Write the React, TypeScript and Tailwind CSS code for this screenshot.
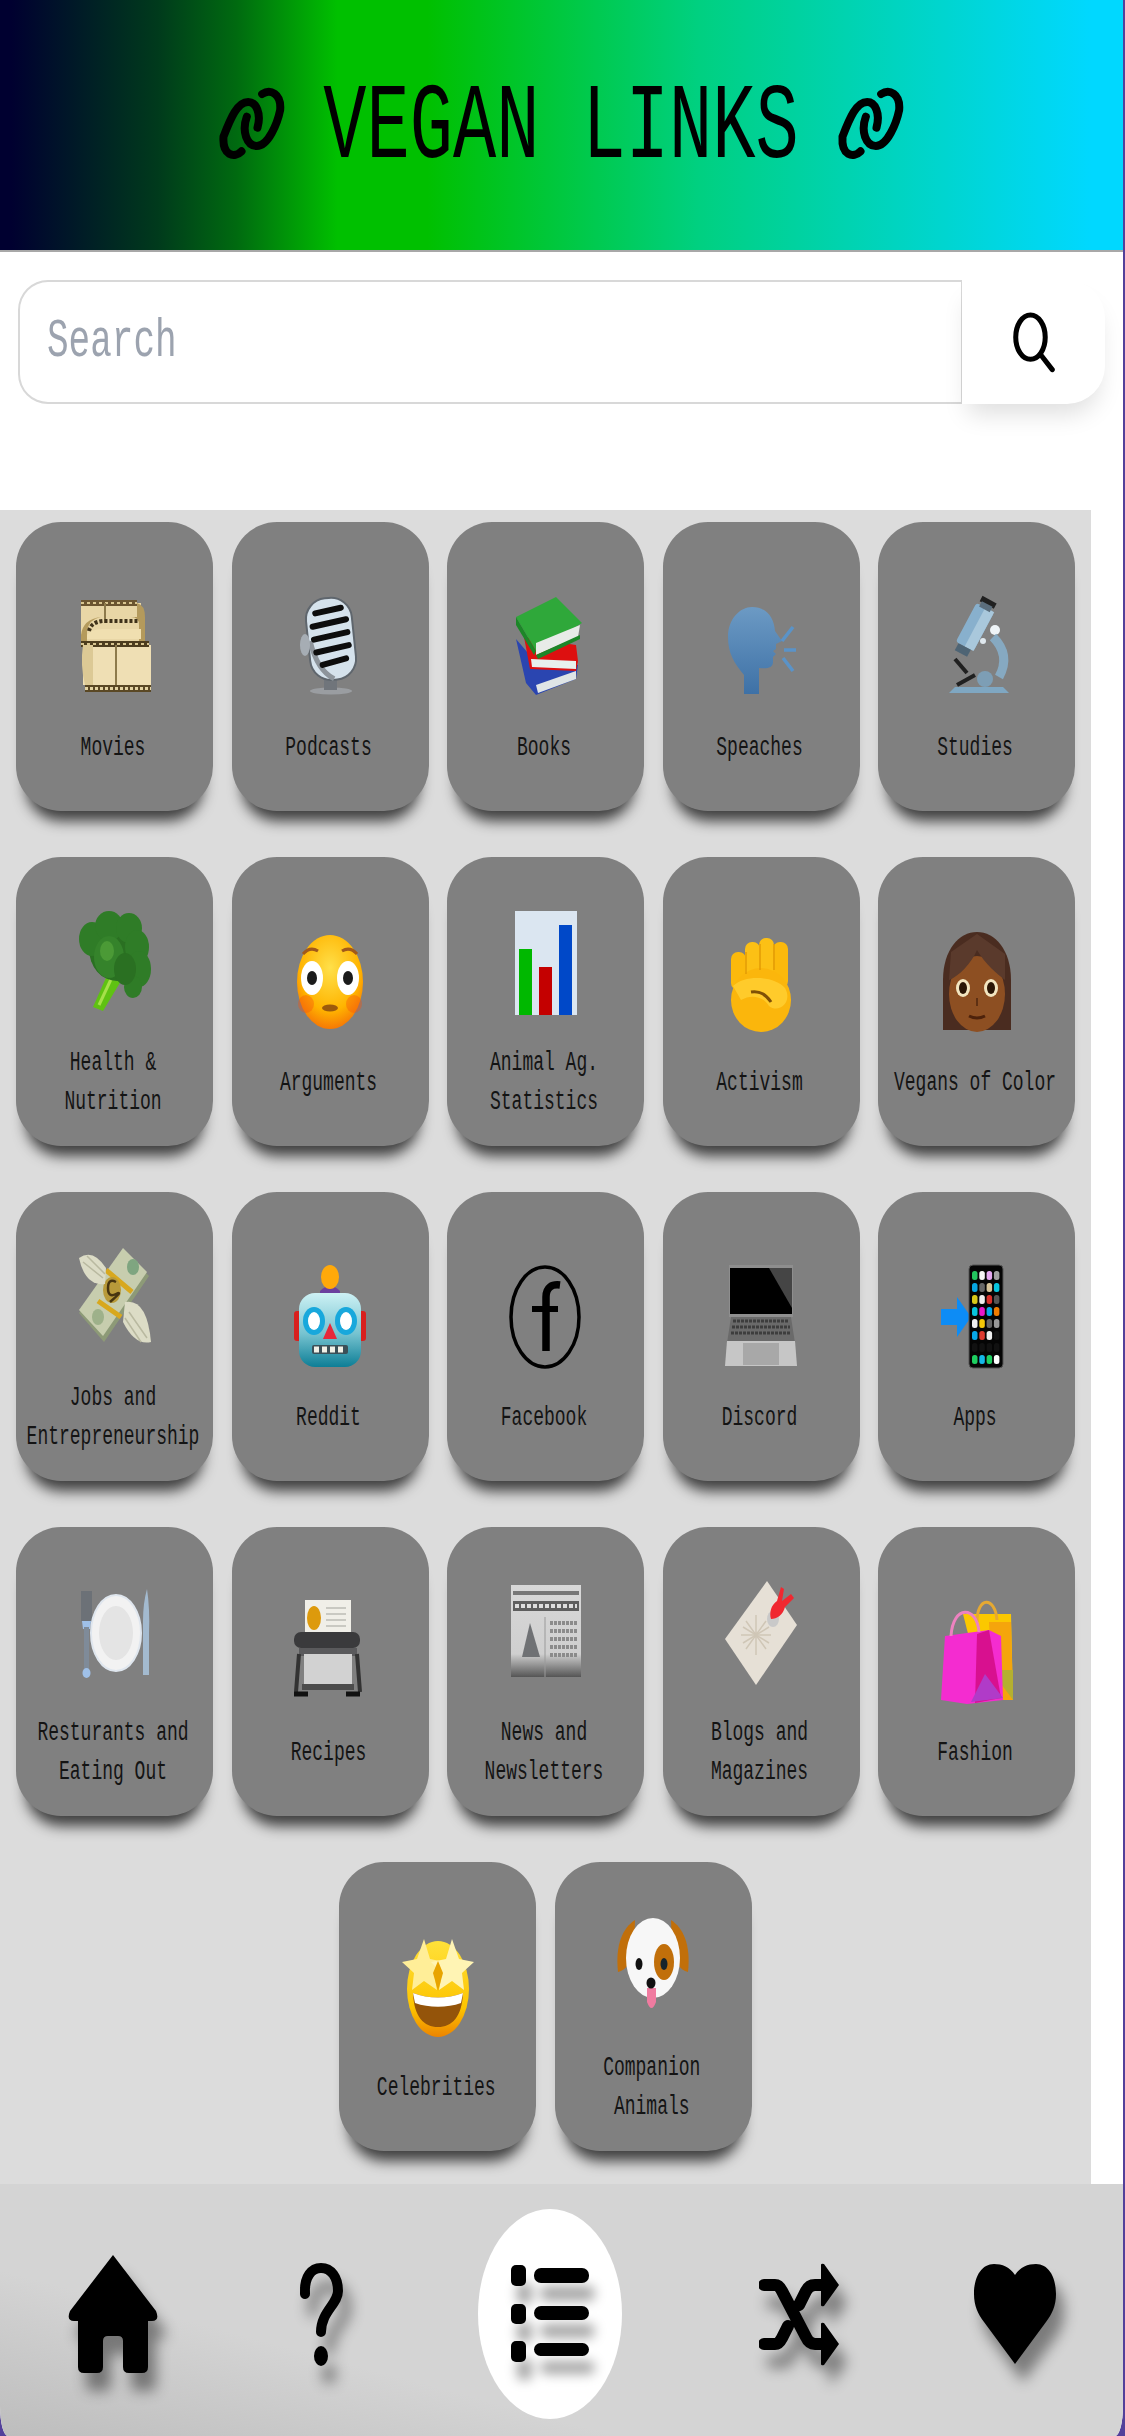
import React from "react";

const mono = "font-['Liberation_Mono','DejaVu_Sans_Mono',monospace]";

function E({ children }: { children: React.ReactNode }) {
  return (
    <svg width="72" height="104" viewBox="0 0 72 104" className="block overflow-visible">
      {children}
    </svg>
  );
}

const Movies = () => (
  <E>
    <rect x="2" y="8" width="60" height="44" fill="#e8d6a6" />
    <rect x="2" y="5" width="56" height="6" fill="#6b5530" />
    <path d="M2 8h56" stroke="#d9c690" strokeWidth="2" strokeDasharray="3 3" />
    <path d="M26 8v20" stroke="#8d7a4b" strokeWidth="2" />
    <path d="M58 8q8 2 8 14v24h-6v-16q0-8-8-8H22q-12 2-14 14v12H2V40q2-16 20-18h36z" fill="#b49a5c" />
    <path d="M10 36q2-9 14-10h36" fill="none" stroke="#3f321a" strokeWidth="4" strokeDasharray="3 2" />
    <path d="M8 40q4-6 16-6h38v10H8z" fill="#f0dfb0" />
    <rect x="4" y="50" width="68" height="40" fill="#efdfb4" />
    <rect x="2" y="46" width="68" height="6" fill="#4d3d1e" />
    <path d="M2 49h68" stroke="#d9c690" strokeWidth="2" strokeDasharray="3 3" />
    <path d="M37 50v40" stroke="#8d7a4b" strokeWidth="2" />
    <path d="M4 50q-3 20 2 40h8V50z" fill="#dcc995" />
    <rect x="6" y="90" width="66" height="7" fill="#5a4825" />
    <path d="M6 93.5h66" stroke="#e3d3a2" strokeWidth="3" strokeDasharray="3 2" />
  </E>
);

const Mic = () => (
  <E>
    <ellipse cx="37" cy="96" rx="21" ry="3.500" fill="#9a9da1" />
    <rect x="30" y="78" width="13" height="17" fill="#70757b" />
    <g transform="rotate(-6 36 44)">
      <rect x="14" y="3" width="46" height="82" rx="21" fill="#d5e2ec" stroke="#5f666d" strokeWidth="2" />
      <path d="M16 44q4 30 20 40" fill="none" stroke="#8d949b" strokeWidth="5" />
      <g stroke="#0d0d0d" strokeWidth="6" strokeLinecap="round">
        <path d="M24 17 50 14" />
        <path d="M20 30 54 26" />
        <path d="M20 43 54 39" />
        <path d="M21 56 54 52" />
        <path d="M26 69 50 65" />
      </g>
    </g>
    <ellipse cx="11" cy="50" rx="5" ry="11" fill="#a6adb4" />
  </E>
);

const Books = () => (
  <E>
    <path d="M6 44 16 88 26 100 66 84 68 70 18 58z" fill="#2a45b0" />
    <path d="M26 90 66 76 66 84 28 98z" fill="#dfe5e6" />
    <path d="M14 42 66 50 68 66 66 76 20 74z" fill="#dd1010" />
    <path d="M21 64 66 66 66 74 22 72z" fill="#e8f1ee" />
    <path d="M6 22 46 2 72 28 26 56z" fill="#2fa83a" />
    <path d="M6 22 26 56 24 60 6 30z" fill="#1c8628" />
    <path d="M26 48 70 30 68 42 26 60z" fill="#e8ebe8" />
    <path d="M26 60 70 40 70 44 28 64z" fill="#1c8628" />
  </E>
);

const Speak = () => (
  <E>
    <defs>
      <linearGradient id="sp" x1="0" y1="0" x2="0" y2="1">
        <stop offset="0" stopColor="#6c9ac4" />
        <stop offset="1" stopColor="#3e71a6" />
      </linearGradient>
    </defs>
    <g transform="translate(3 6)">
      <path d="M0 36C0 18 12 6 24 6c14 0 22 10 23 24l7 10-6 3v5l-3 2 3 3-3 3v5c0 6-6 7-14 6v26H16V74C6 62 0 52 0 36z" fill="url(#sp)" />
    </g>
    <g stroke="#5a93c8" strokeWidth="3.500" fill="none">
      <path d="M57 46 68 32" />
      <path d="M59 55H71" />
      <path d="M58 63 68 76" />
    </g>
  </E>
);

const Scope = () => (
  <E>
    <g transform="rotate(28 34 32)">
      <rect x="24" y="10" width="20" height="44" rx="3" fill="#88b0cd" />
      <rect x="34" y="10" width="10" height="44" fill="#a9c8dc" />
      <rect x="26" y="1" width="16" height="6" fill="#202020" />
      <rect x="28" y="6" width="12" height="6" fill="#5b6e7d" />
      <rect x="27" y="54" width="14" height="8" fill="#4e6474" />
    </g>
    <circle cx="54" cy="35" r="5" fill="#eef3f6" />
    <circle cx="42" cy="46" r="3" fill="#dfe8ee" />
    <path d="M52 42q18 18 6 40" fill="none" stroke="#86a9c1" strokeWidth="9" />
    <path d="M14 64 26 78" stroke="#202020" strokeWidth="4" />
    <path d="M16 90 34 80" stroke="#202020" strokeWidth="4" />
    <circle cx="44" cy="84" r="8" fill="#7d9eb5" />
    <path d="M8 98 14 92h48l6 6z" fill="#7fa7c2" />
  </E>
);

const Broccoli = () => (
  <E>
    <path d="M14 96 30 60h18L24 100z" fill="#5fc212" />
    <path d="M20 94 34 64" stroke="#a6e04a" strokeWidth="3" />
    <ellipse cx="38" cy="38" rx="28" ry="32" fill="#2a7022" />
    <g fill="#2f7c27">
      <ellipse cx="13" cy="28" rx="13" ry="17" />
      <ellipse cx="30" cy="15" rx="14" ry="15" />
      <ellipse cx="50" cy="17" rx="13" ry="15" />
      <ellipse cx="58" cy="36" rx="12" ry="17" />
      <ellipse cx="60" cy="58" rx="12" ry="18" />
      <ellipse cx="54" cy="76" rx="9" ry="11" />
    </g>
    <ellipse cx="30" cy="46" rx="15" ry="21" fill="#35832b" />
    <ellipse cx="46" cy="58" rx="11" ry="16" fill="#2a7022" />
    <ellipse cx="28" cy="40" rx="7" ry="10" fill="#4b9a36" />
  </E>
);

const Flushed = () => (
  <E>
    <defs>
      <radialGradient id="fl" cx="0.5" cy="0.35" r="0.7">
        <stop offset="0" stopColor="#ffe04a" />
        <stop offset="0.65" stopColor="#ffb400" />
        <stop offset="1" stopColor="#f46a06" />
      </radialGradient>
    </defs>
    <ellipse cx="36" cy="52" rx="33" ry="47" fill="url(#fl)" />
    <ellipse cx="18" cy="48" rx="11" ry="17" fill="#fff" />
    <ellipse cx="54" cy="48" rx="11" ry="17" fill="#fff" />
    <ellipse cx="18" cy="48" rx="5" ry="7" fill="#1b1b1b" />
    <ellipse cx="54" cy="48" rx="5" ry="7" fill="#1b1b1b" />
    <path d="M9 24q7-8 15-3M63 24q-7-8-15-3" stroke="#a1591a" strokeWidth="3" fill="none" />
    <ellipse cx="36" cy="78" rx="8" ry="3.5" fill="#9c5a0c" />
    <ellipse cx="12" cy="74" rx="8" ry="9" fill="#f5540c" opacity=".4" />
    <ellipse cx="60" cy="74" rx="8" ry="9" fill="#f5540c" opacity=".4" />
  </E>
);

const Chart = () => (
  <E>
    <rect x="5" y="0" width="62" height="104" fill="#dbe6f1" />
    <rect x="9" y="38" width="13" height="66" fill="#00b800" />
    <rect x="29" y="56" width="13" height="48" fill="#c40000" />
    <rect x="49" y="14" width="13" height="90" fill="#0048c8" />
  </E>
);

const Fist = () => (
  <E>
    <rect x="6" y="22" width="15" height="38" rx="7" fill="#fbb90c" />
    <rect x="20" y="12" width="15" height="44" rx="7" fill="#fcc015" />
    <rect x="34" y="8" width="15" height="48" rx="7" fill="#fcc015" />
    <rect x="48" y="12" width="15" height="46" rx="7" fill="#fbb90c" />
    <ellipse cx="36" cy="70" rx="30" ry="32" fill="#fbb60c" />
    <path d="M8 56C20 44 50 46 60 58C68 72 54 84 44 76C38 66 26 64 16 70Z" fill="#ffcb2b" />
    <path d="M26 62Q38 60 46 72" stroke="#7f5006" strokeWidth="3" fill="none" />
    <path d="M21 22v22M35 14v26M49 14v26" stroke="#e29a05" strokeWidth="1.500" />
  </E>
);

const Woman = () => (
  <E>
    <path d="M2 100V50C2 20 18 2 36 2s34 18 34 48v50z" fill="#4a2c20" />
    <ellipse cx="36" cy="64" rx="28" ry="38" fill="#8d4f22" />
    <path d="M8 50C18 46 30 34 36 20c8 14 20 24 28 30V24L36 4 10 22z" fill="#5a3a2c" />
    <ellipse cx="22" cy="58" rx="7" ry="9" fill="#f2e5c0" />
    <ellipse cx="50" cy="58" rx="7" ry="9" fill="#f2e5c0" />
    <ellipse cx="22" cy="58" rx="4" ry="6" fill="#2a1606" />
    <ellipse cx="50" cy="58" rx="4" ry="6" fill="#2a1606" />
    <path d="M36 68v8" stroke="#5e3013" strokeWidth="2" />
    <path d="M28 86q8 4 16 0" stroke="#4d220b" strokeWidth="3" fill="none" />
  </E>
);

const Money = () => (
  <E>
    <path d="M0 67 25 96 70 30 45 5z" fill="#8d9a77" />
    <path d="M0 64 24 90 68 26 44 2z" fill="#c7cdae" />
    <path d="M27 24 53 46M19 55 42 71" stroke="#d8a81e" strokeWidth="5" />
    <ellipse cx="33" cy="44" rx="9" ry="13" fill="#b89a3a" />
    <path d="M37 36q-8-4-8 6t8 6-6 8" stroke="#473510" strokeWidth="2.500" fill="none" />
    <ellipse cx="54" cy="21" rx="6" ry="8" fill="#7fa580" />
    <ellipse cx="19" cy="71" rx="6" ry="8" fill="#9eb18a" />
    <path d="M0 12Q14 2 27 22L26 38Q6 40 0 12z" fill="#dcdcc6" />
    <path d="M4 16 24 32M8 10 26 28" stroke="#b9b9a0" strokeWidth="1.500" />
    <path d="M72 96Q56 100 44 76L46 56Q68 52 72 96z" fill="#dcdcc6" />
    <path d="M68 92 50 66M62 96 46 72" stroke="#b9b9a0" strokeWidth="1.500" />
  </E>
);

const Robot = () => (
  <E>
    <rect x="0" y="46" width="8" height="30" rx="3" fill="#d9201e" />
    <rect x="64" y="46" width="8" height="30" rx="3" fill="#d9201e" />
    <path d="M26 26q10-10 20 0v6H26z" fill="#6b3f9e" />
    <ellipse cx="36" cy="12" rx="9" ry="12" fill="#ffa90a" />
    <defs>
      <linearGradient id="rb" x1="0" y1="0" x2="0" y2="1">
        <stop offset="0" stopColor="#cdf1f4" />
        <stop offset="0.55" stopColor="#76c3d0" />
        <stop offset="1" stopColor="#0d7e96" />
      </linearGradient>
    </defs>
    <rect x="5" y="28" width="62" height="74" rx="16" fill="url(#rb)" />
    <ellipse cx="20" cy="56" rx="11" ry="14" fill="#18a8dc" />
    <ellipse cx="52" cy="56" rx="11" ry="14" fill="#18a8dc" />
    <ellipse cx="20" cy="56" rx="6" ry="9" fill="#fff" />
    <ellipse cx="52" cy="56" rx="6" ry="9" fill="#fff" />
    <path d="M36 58 43 74H29z" fill="#e6283a" />
    <rect x="18" y="80" width="36" height="9" rx="2" fill="#3b5058" />
    <path d="M20 84.500h32" stroke="#f0f0e6" strokeWidth="6" strokeDasharray="5 3" />
  </E>
);

const Fb = () => (
  <E>
    <ellipse cx="35" cy="52" rx="34" ry="50" fill="none" stroke="#000" strokeWidth="3.500" />
    <path d="M36 86V32c0-10 6-13 14-12" fill="none" stroke="#000" strokeWidth="7.500" />
    <path d="M22 44H48" stroke="#000" strokeWidth="6" />
  </E>
);

const Laptop = () => (
  <E>
    <rect x="4" y="0" width="64" height="52" fill="#8e8e8e" />
    <rect x="5" y="3" width="62" height="46" fill="#000" />
    <path d="M44 3h23v40z" fill="#454545" />
    <path d="M6 52h60l4 26H2z" fill="#6a6a6a" />
    <path d="M8 56h56M7 62h58M6 68h60" stroke="#3d3d3d" strokeWidth="3" strokeDasharray="3 1" />
    <path d="M2 76h68l2 25H0z" fill="#c6c6c6" />
    <rect x="18" y="78" width="36" height="22" fill="#a8a8a8" />
  </E>
);

const Phone = () => {
  const rows = [
    ["#22c55e", "#f5f5f5", "#e4a8f0", "#a0a0a0"],
    ["#06a5e0", "#666", "#d8c59a", "#07c4dc"],
    ["#d8c818", "#eee", "#d9302a", "#555"],
    ["#07c4dc", "#e818c8", "#08a8e8", "#f07c00"],
    ["#eee", "#f4c808", "#666", "#999"],
    ["#08a8e8", "#dd3a30", "#eee", "#111"],
    ["#111", "#111", "#111", "#111"],
    ["#1ecf60", "#14b8e8", "#1ecf60", "#fff"],
  ];
  return (
    <E>
      <path d="M0 44h16V32l14 20-14 20V60H0z" fill="#0d8cf5" />
      <rect x="28" y="0" width="34" height="103" rx="4" fill="#050505" stroke="#555" strokeWidth="1" />
      {rows.map((r, i) =>
        r.map((c, j) => <rect key={i + "-" + j} x={31 + j * 7.300} y={6 + i * 12} width="5.500" height="9" rx="2.500" fill={c} />)
      )}
    </E>
  );
};

const Plate = () => (
  <E>
    <rect x="2" y="10" width="11" height="30" fill="#6c7177" />
    <path d="M3 40h9l-1 8H4z" fill="#9fc0e8" />
    <rect x="5" y="46" width="5" height="44" fill="#7f8b99" />
    <ellipse cx="7.500" cy="92" rx="4" ry="5" fill="#9fc0e8" />
    <ellipse cx="37" cy="52" rx="25" ry="38" fill="#f2f2f2" stroke="#dfe6ee" strokeWidth="2" />
    <ellipse cx="37" cy="52" rx="17" ry="27" fill="#e4e4e4" />
    <path d="M68 8q3 20 2 44v42h-6V40q0-18 4-32z" fill="#a3bacf" />
  </E>
);

const Printer = () => (
  <E>
    <rect x="11" y="0" width="46" height="36" fill="#f0efe8" />
    <ellipse cx="20" cy="18" rx="7" ry="12" fill="#dd9a0c" />
    <path d="M32 8h20M32 14h20M32 20h20M32 26h20" stroke="#c9c9c2" strokeWidth="2" />
    <rect x="0" y="32" width="66" height="16" rx="7" fill="#3a3a3c" />
    <rect x="5" y="48" width="58" height="8" fill="#5a5a5c" />
    <rect x="10" y="54" width="48" height="34" fill="#d2d2d2" />
    <path d="M5 54 2 92M63 54l3 38" stroke="#333" strokeWidth="4" />
    <rect x="8" y="84" width="52" height="6" fill="#4c4c4c" />
    <path d="M0 94h14M52 94h14" stroke="#111" strokeWidth="5" />
  </E>
);

const News = () => (
  <E>
    <defs>
      <linearGradient id="nw" x1="0" y1="0" x2="0" y2="1">
        <stop offset="0" stopColor="#d8d8d8" />
        <stop offset="0.75" stopColor="#cfcfcf" />
        <stop offset="1" stopColor="#555" />
      </linearGradient>
    </defs>
    <rect x="1" y="4" width="70" height="92" fill="url(#nw)" />
    <rect x="3" y="10" width="66" height="4" fill="#777" />
    <rect x="3" y="20" width="66" height="10" fill="#5e5e5e" />
    <path d="M5 25h62" stroke="#ddd" strokeWidth="4" strokeDasharray="4 2" />
    <path d="M12 76 20 42l10 34z" fill="#6f7174" />
    <path d="M40 42h28M40 50h28M40 58h28M40 66h28M40 74h28" stroke="#8b8b8b" strokeWidth="4" strokeDasharray="3 1" />
    <path d="M35 36v60" stroke="#9a9a9a" />
  </E>
);

const Memo = () => (
  <E>
    <path d="M42 0 72 44 31 104 0 58z" fill="#e6e0d6" />
    <g stroke="#cfc6b6" strokeWidth="1.500">
      <path d="M16 54h30M31 34v40M21 40l20 28M41 40 21 68" />
      <path d="M18 46 44 62M44 46 18 62" />
    </g>
    <ellipse cx="48" cy="38" rx="6" ry="8" fill="#c9c9c9" />
    <path d="M46 38c-2-6 0-14 6-18l4-14 3 2-2 12 9-7 3 4-9 9c-2 8-8 12-14 12z" fill="#f02830" />
  </E>
);

const Bags = () => (
  <E>
    <path d="M22 14h38l10 0 2 86H44z" fill="#fbc800" />
    <path d="M48 22h22l2 78H52z" fill="#f5a50c" />
    <path d="M50 70h22v30z" fill="#b4b030" />
    <path d="M36 22C36-4 54-4 56 20" fill="none" stroke="#e5a932" strokeWidth="3" />
    <path d="M4 36 48 30 60 36 62 100 26 104 0 100z" fill="#f42cd0" />
    <path d="M36 34 48 30 60 98 34 103z" fill="#d8108f" />
    <path d="M44 74 62 98 30 102z" fill="#b03bc8" />
    <path d="M10 36C12 4 36 6 38 32" fill="none" stroke="#ee82c0" strokeWidth="3" />
  </E>
);

const Star = () => (
  <E>
    <defs>
      <linearGradient id="st" x1="0" y1="0" x2="0" y2="1">
        <stop offset="0" stopColor="#ffe13a" />
        <stop offset="0.7" stopColor="#fdc400" />
        <stop offset="1" stopColor="#ec8400" />
      </linearGradient>
    </defs>
    <ellipse cx="36" cy="54" rx="31" ry="48" fill="url(#st)" />
    <path d="M22 4l6 20 15 3-11 11 3 17-13-9-12 9 2-17L0 27l15-3z" fill="#ffee98" />
    <path d="M50 4l7 20 15 3-12 11 2 17-12-9-13 9 3-17-11-11 15-3z" fill="#fff4b4" />
    <path d="M36 26l5 12-5 18-5-18z" fill="#e8a400" />
    <path d="M11 58c16 6 34 6 50 0-1 24-11 34-25 34S12 82 11 58z" fill="#94540a" />
    <path d="M11 58c16 6 34 6 50 0l-2 10c-14 5-32 5-46 0z" fill="#fff" />
  </E>
);

const Dog = () => (
  <E>
    <path d="M18 4C6 12-2 28 1 56c8-2 14-10 16-22z" fill="#c16f0a" />
    <path d="M54 4c12 8 20 24 17 52-8-2-14-10-16-22z" fill="#c16f0a" />
    <ellipse cx="36" cy="42" rx="27" ry="40" fill="#f7f7f7" />
    <ellipse cx="47" cy="46" rx="10" ry="18" fill="#c16f0a" />
    <ellipse cx="47" cy="48" rx="3.500" ry="6" fill="#16242c" />
    <ellipse cx="22" cy="48" rx="3.500" ry="6" fill="#111" />
    <path d="M30 72h9v14q-4.500 12-9 0z" fill="#f07ba0" />
    <ellipse cx="34" cy="67" rx="4.500" ry="5.500" fill="#111" />
  </E>
);

const items: { lines: string[]; icon: React.ReactNode }[] = [
  { lines: ["Movies"], icon: <Movies /> },
  { lines: ["Podcasts"], icon: <Mic /> },
  { lines: ["Books"], icon: <Books /> },
  { lines: ["Speaches"], icon: <Speak /> },
  { lines: ["Studies"], icon: <Scope /> },
  { lines: ["Health &", "Nutrition"], icon: <Broccoli /> },
  { lines: ["Arguments"], icon: <Flushed /> },
  { lines: ["Animal Ag.", "Statistics"], icon: <Chart /> },
  { lines: ["Activism"], icon: <Fist /> },
  { lines: ["Vegans of Color"], icon: <Woman /> },
  { lines: ["Jobs and", "Entrepreneurship"], icon: <Money /> },
  { lines: ["Reddit"], icon: <Robot /> },
  { lines: ["Facebook"], icon: <Fb /> },
  { lines: ["Discord"], icon: <Laptop /> },
  { lines: ["Apps"], icon: <Phone /> },
  { lines: ["Resturants and", "Eating Out"], icon: <Plate /> },
  { lines: ["Recipes"], icon: <Printer /> },
  { lines: ["News and", "Newsletters"], icon: <News /> },
  { lines: ["Blogs and", "Magazines"], icon: <Memo /> },
  { lines: ["Fashion"], icon: <Bags /> },
  { lines: ["Celebrities"], icon: <Star /> },
  { lines: ["Companion", "Animals"], icon: <Dog /> },
];

function LinkIcon() {
  return (
    <svg width="67" height="75" viewBox="60 40 200 225" fill="none" stroke="#000" strokeWidth="24" strokeLinecap="round">
      <path d="M130 236C108 258 72 248 76 192C98 135 118 88 150 88C174 88 190 122 178 165" />
      <path d="M192 64C216 48 250 62 246 112C238 152 210 220 176 220C146 220 130 176 146 132" />
    </svg>
  );
}

function Card({ lines, icon }: { lines: string[]; icon: React.ReactNode }) {
  return (
    <div className="w-[197px] h-[289px] rounded-[45px] bg-[#808080] shadow-[0_20px_14px_-10px_rgba(0,0,0,0.72)] flex flex-col items-center justify-center">
      <div className="h-[159px] flex items-center justify-center">{icon}</div>
      {lines.map((l) => (
        <div key={l} className={`h-[39px] leading-[39px] text-[18px] whitespace-pre text-[#141414] scale-y-150 translate-y-[2px] -translate-x-[1.5px] ${mono}`}>
          {l}
        </div>
      ))}
    </div>
  );
}

const navShadow = "drop-shadow-[8px_18px_7px_rgba(0,0,0,0.42)]";

export default function App() {
  return (
    <div className="w-[1125px] h-[2436px] bg-[#53409a] overflow-hidden">
      <div className="w-[1123px] h-[2436px] bg-white rounded-bl-[8px_30px] rounded-br-[8px_30px] overflow-hidden flex flex-col">
        <header className="w-[1125px] h-[252px] shrink-0 border-b-2 border-[#a8a8a8] bg-[linear-gradient(to_right,#000030_1%,#003a1c_14%,#006a10_21%,#00c000_30%,#00c000_38%,#00d080_62%,#00d8ff_97%)] flex items-center justify-center gap-[38px] pb-1 pr-[3px]">
          <LinkIcon />
          <h1 className={`mt-[10px] text-[72px] leading-none font-normal text-black scale-y-150 whitespace-pre ${mono}`}>VEGAN LINKS</h1>
          <LinkIcon />
        </header>

        <div className="h-[258px] shrink-0 pt-[28px] pl-[18px]">
          <div className="flex h-[124px] w-[1087px]">
            <div className="flex-1 rounded-l-[30px] border-2 border-r border-[#d8d8d8] flex items-center pl-[27px] overflow-hidden">
              <input
                placeholder="Search"
                className={`w-[600px] h-[50px] outline-none bg-transparent text-[36px] scale-y-150 origin-left placeholder:text-[#9ca3af] ${mono}`}
              />
            </div>
            <button className="w-[143px] rounded-r-[38px] bg-white shadow-[0_16px_24px_-6px_rgba(0,0,0,0.13)] flex items-center justify-center">
              <svg width="42" height="62" viewBox="180 150 125 185" fill="none" stroke="#000" strokeWidth="15" strokeLinecap="round">
                <ellipse cx="232" cy="228" rx="44" ry="66" />
                <path d="M262 280 297 325" />
              </svg>
            </button>
          </div>
        </div>

        <main className="w-[1091px] h-[1674px] shrink-0 bg-[#dcdcdc] px-[15px] pt-[12px] flex flex-wrap justify-center content-start gap-x-[18.5px] gap-y-[46px]">
          {items.map((it) => (
            <Card key={it.lines[0]} lines={it.lines} icon={it.icon} />
          ))}
        </main>

        <nav className="flex-1 bg-[linear-gradient(15deg,#bdbdbd,#d4d4d4_30%)] flex items-center pt-2 pl-[68px]">
          <svg width="90" height="118" viewBox="0 0 90 118" className={navShadow}>
            <path d="M45 0 88 56Q92 66 84 66H80V112Q80 118 74 118H61Q55 118 55 112V86Q55 81 50 81H40Q35 81 35 86V112Q35 118 29 118H16Q10 118 10 112V66H6Q-2 66 2 56Z" />
          </svg>
          <svg width="45" height="104" viewBox="0 0 45 104" className={`ml-[140px] ${navShadow}`}>
            <path d="M7 32C6 14 14 6 23 6C33 6 40 15 40 29C40 42 23 50 23 70" fill="none" stroke="#000" strokeWidth="10" strokeLinecap="round" />
            <ellipse cx="23" cy="94" rx="7" ry="10" />
          </svg>
          <div className="ml-[135px] w-[144px] h-[210px] rounded-[50%] bg-white flex items-center justify-center">
            <svg width="78" height="98" viewBox="0 0 78 98" className="drop-shadow-[6px_18px_6px_rgba(0,0,0,0.35)]">
              <rect x="0" y="0" width="15" height="21" rx="5" />
              <rect x="0" y="39" width="15" height="20" rx="5" />
              <rect x="0" y="76" width="15" height="21" rx="5" />
              <rect x="23" y="3" width="55" height="15" rx="7" />
              <rect x="23" y="41" width="55" height="14" rx="7" />
              <rect x="23" y="78" width="55" height="13" rx="6.5" />
            </svg>
          </div>
          <svg width="80" height="103" viewBox="0 0 80 103" className={`ml-[137px] ${navShadow}`}>
            <path d="M5 22H16Q20 22 23 28L47 74Q50 81 56 81H66M5 81H16Q20 81 23 75L29 63M40 42 47 28Q50 22 56 22H66" fill="none" stroke="#000" strokeWidth="12" strokeLinecap="round" />
            <path d="M62 2Q62 0 65 1L80 22 65 43Q62 44 62 42ZM62 61Q62 59 65 60L80 81 65 102Q62 103 62 101Z" />
          </svg>
          <svg width="82" height="100" viewBox="0 0 82 100" className={`ml-[135px] ${navShadow}`}>
            <path d="M41 11C36 3 28 0 20 0C8 0 0 12 0 30C0 42 4 50 10 58L41 100L72 58C78 50 82 42 82 30C82 12 74 0 62 0C54 0 46 3 41 11Z" />
          </svg>
        </nav>
      </div>
    </div>
  );
}
